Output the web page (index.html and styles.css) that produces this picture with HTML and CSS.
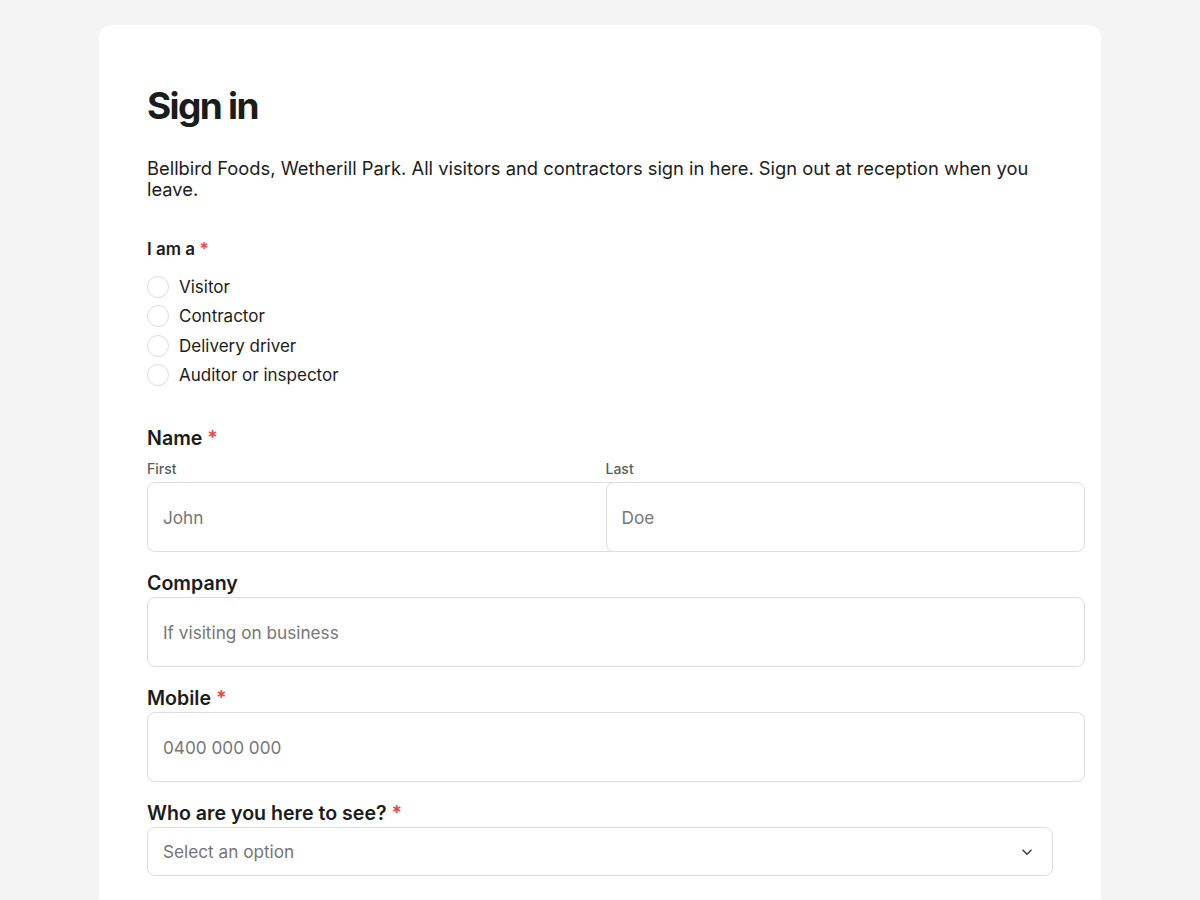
FILE: index.html
```html
<!DOCTYPE html>
<html lang="en">
<head>
    <meta charset="UTF-8">
    <meta name="viewport" content="width=device-width, initial-scale=1.0">
    <title>Sign in</title>
    <link rel="stylesheet" href="styles.css">
</head>
<body>
    <div class="card">
        <h1>Sign in</h1>
        <p class="intro">Bellbird Foods, Wetherill Park. All visitors and contractors sign in here. Sign out at reception when you leave.</p>

        <form class="form">
            <fieldset class="radio-group">
                <legend class="group-label">I am a <span class="req">*</span></legend>
                <label class="radio"><input type="radio" name="role"><span class="dot"></span>Visitor</label>
                <label class="radio"><input type="radio" name="role"><span class="dot"></span>Contractor</label>
                <label class="radio"><input type="radio" name="role"><span class="dot"></span>Delivery driver</label>
                <label class="radio"><input type="radio" name="role"><span class="dot"></span>Auditor or inspector</label>
            </fieldset>

            <div class="field">
                <div class="field-label">Name <span class="req">*</span></div>
                <div class="name-row">
                    <div class="name-part">
                        <label class="sub-label" for="first">First</label>
                        <input class="text-input" id="first" type="text" placeholder="John">
                    </div>
                    <div class="name-part">
                        <label class="sub-label" for="last">Last</label>
                        <input class="text-input" id="last" type="text" placeholder="Doe">
                    </div>
                </div>
            </div>

            <div class="field">
                <label class="field-label" for="company">Company</label>
                <input class="text-input" id="company" type="text" placeholder="If visiting on business">
            </div>

            <div class="field">
                <label class="field-label" for="mobile">Mobile <span class="req">*</span></label>
                <input class="text-input" id="mobile" type="tel" placeholder="0400 000 000">
            </div>

            <div class="field">
                <label class="field-label" for="host">Who are you here to see? <span class="req">*</span></label>
                <div class="select">
                    <span class="select-text">Select an option</span>
                    <svg class="chevron" width="14" height="14" viewBox="0 0 14 14" fill="none">
                        <path d="M3 5.2 7 9.2 11 5.2" stroke="#444" stroke-width="1.6" stroke-linecap="round" stroke-linejoin="round"/>
                    </svg>
                </div>
            </div>
        </form>
    </div>
</body>
</html>
```

FILE: styles.css
```css
body {
    margin: 0;
    padding: 25px 0 0;
    background-color: #f4f4f4;
    font-family: Inter, 'Noto Sans', sans-serif;
    color: #1b1d1c;
}
.card {
    max-width: 1002px;
    margin: 0 auto;
    box-sizing: border-box;
    min-height: 900px;
    background: white;
    border-radius: 12px;
    padding: 58px 48px;
}
h1 {
    margin: 0 0 29px;
    font-size: 37px;
    line-height: 46px;
    font-weight: 700;
    letter-spacing: -0.045em;
    color: #1a1d1c;
}
.intro {
    margin: 0 0 39px;
    font-size: 18.35px;
    line-height: 21px;
}
.form {
    display: flex;
    flex-direction: column;
    gap: 19px;
}
.radio-group {
    border: none;
    margin: 0 0 17px;
    padding: 0;
    display: flex;
    flex-direction: column;
}
.group-label {
    padding: 0;
    margin-bottom: 12px;
    font-size: 17px;
    line-height: 21px;
    font-weight: 600;
}
.req {
    color: #e5484d;
}
.radio {
    display: flex;
    align-items: center;
    gap: 10px;
    height: 29.5px;
    font-size: 17px;
}
.radio input {
    display: none;
}
.dot {
    width: 20px;
    height: 20px;
    border: 1px solid #dcdcdc;
    border-radius: 50%;
}
.field {
    display: flex;
    flex-direction: column;
}
.field-label {
    font-size: 19.6px;
    line-height: 24px;
    font-weight: 600;
    margin-bottom: 2px;
}
.name-row {
    display: grid;
    grid-template-columns: 1fr 1fr;
    gap: 11px;
    margin-top: 8px;
}
.name-part {
    display: flex;
    flex-direction: column;
}
.sub-label {
    font-size: 14px;
    line-height: 17px;
    font-weight: 500;
    color: #5c5c5c;
    margin-bottom: 5px;
}
.text-input {
    box-sizing: content-box;
    width: 100%;
    height: 68px;
    padding: 0 15px;
    border: 1px solid #dddddd;
    border-radius: 8px;
    background: white;
    font-family: inherit;
    font-size: 17.2px;
    color: #1b1d1c;
    outline: none;
}
.text-input::placeholder {
    color: #767676;
}
.select {
    height: 47px;
    border: 1px solid #dddddd;
    border-radius: 8px;
    padding: 0 18px 0 15px;
    display: flex;
    align-items: center;
    justify-content: space-between;
    font-size: 17.2px;
    color: #767676;
}
```
